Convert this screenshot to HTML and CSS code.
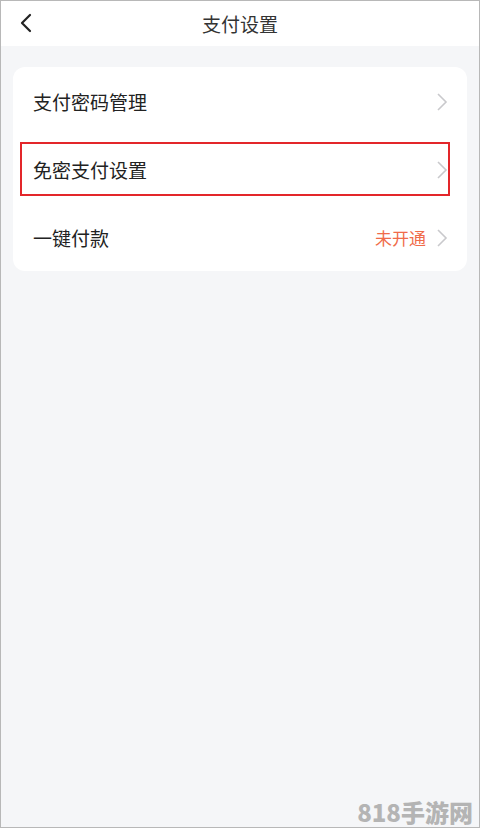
FILE: index.html
```html
<!DOCTYPE html>
<html>
<head>
<meta charset="utf-8">
<title>支付设置</title>
<link rel="stylesheet" href="styles.css">
</head>
<body>
<div class="screen">
    <div class="header">
        <span class="back">
            <svg width="14" height="20" viewBox="0 0 14 20"><path d="M11 2 L3 10 L11 18" fill="none" stroke="#222" stroke-width="2.2" stroke-linecap="round" stroke-linejoin="round"/></svg>
        </span>
        <h1>支付设置</h1>
    </div>
    <div class="content">
        <div class="card">
            <div class="row">
                <span class="label">支付密码管理</span>
                <span class="arrow"><svg width="12" height="20" viewBox="0 0 12 20"><path d="M2 2 L10 10 L2 18" fill="none" stroke="#c9c9cc" stroke-width="1.6"/></svg></span>
            </div>
            <div class="row">
                <span class="label">免密支付设置</span>
                <span class="arrow"><svg width="12" height="20" viewBox="0 0 12 20"><path d="M2 2 L10 10 L2 18" fill="none" stroke="#c9c9cc" stroke-width="1.6"/></svg></span>
                <div class="mark"></div>
            </div>
            <div class="row">
                <span class="label">一键付款</span>
                <span class="status">未开通</span>
                <span class="arrow"><svg width="12" height="20" viewBox="0 0 12 20"><path d="M2 2 L10 10 L2 18" fill="none" stroke="#c9c9cc" stroke-width="1.6"/></svg></span>
            </div>
        </div>
    </div>
    <div class="watermark">818手游网</div>
</div>
</body>
</html>
```

FILE: styles.css
```css
* {
    box-sizing: border-box;
}

html, body {
    margin: 0;
    padding: 0;
}

body {
    font-family: "Noto Sans CJK SC", "Noto Sans", sans-serif;
    background-color: #fff;
}

.screen {
    position: relative;
    width: 480px;
    height: 828px;
    border: 1px solid #b8b8b8;
    background-color: #f5f6f8;
    display: flex;
    flex-direction: column;
    overflow: hidden;
}

.header {
    position: relative;
    height: 45px;
    background-color: #fff;
    display: flex;
    align-items: center;
    justify-content: center;
}

.header h1 {
    margin: 0;
    font-size: 19px;
    font-weight: normal;
    color: #333;
    line-height: 1;
}

.back {
    position: absolute;
    left: 18px;
    top: 12px;
}

.content {
    padding: 21px 12px 0 12px;
}

.card {
    background-color: #fff;
    border-radius: 12px;
}

.row {
    position: relative;
    height: 68px;
    display: flex;
    align-items: center;
    padding: 0 19px 0 20px;
}

.label {
    flex: 1;
    font-size: 19px;
    color: #222;
}

.status {
    font-size: 17px;
    color: #f06b4a;
    margin-right: 10px;
}

.arrow {
    display: flex;
    padding-top: 2px;
}

.mark {
    position: absolute;
    left: 7px;
    right: 17px;
    top: 7px;
    bottom: 7px;
    border: 2px solid #e3262a;
}

.watermark {
    position: absolute;
    right: 6px;
    bottom: 1px;
    font-family: "Noto Sans CJK SC", sans-serif;
    font-size: 24px;
    font-weight: 900;
    color: #b4b4b4;
    line-height: 28px;
}
```
